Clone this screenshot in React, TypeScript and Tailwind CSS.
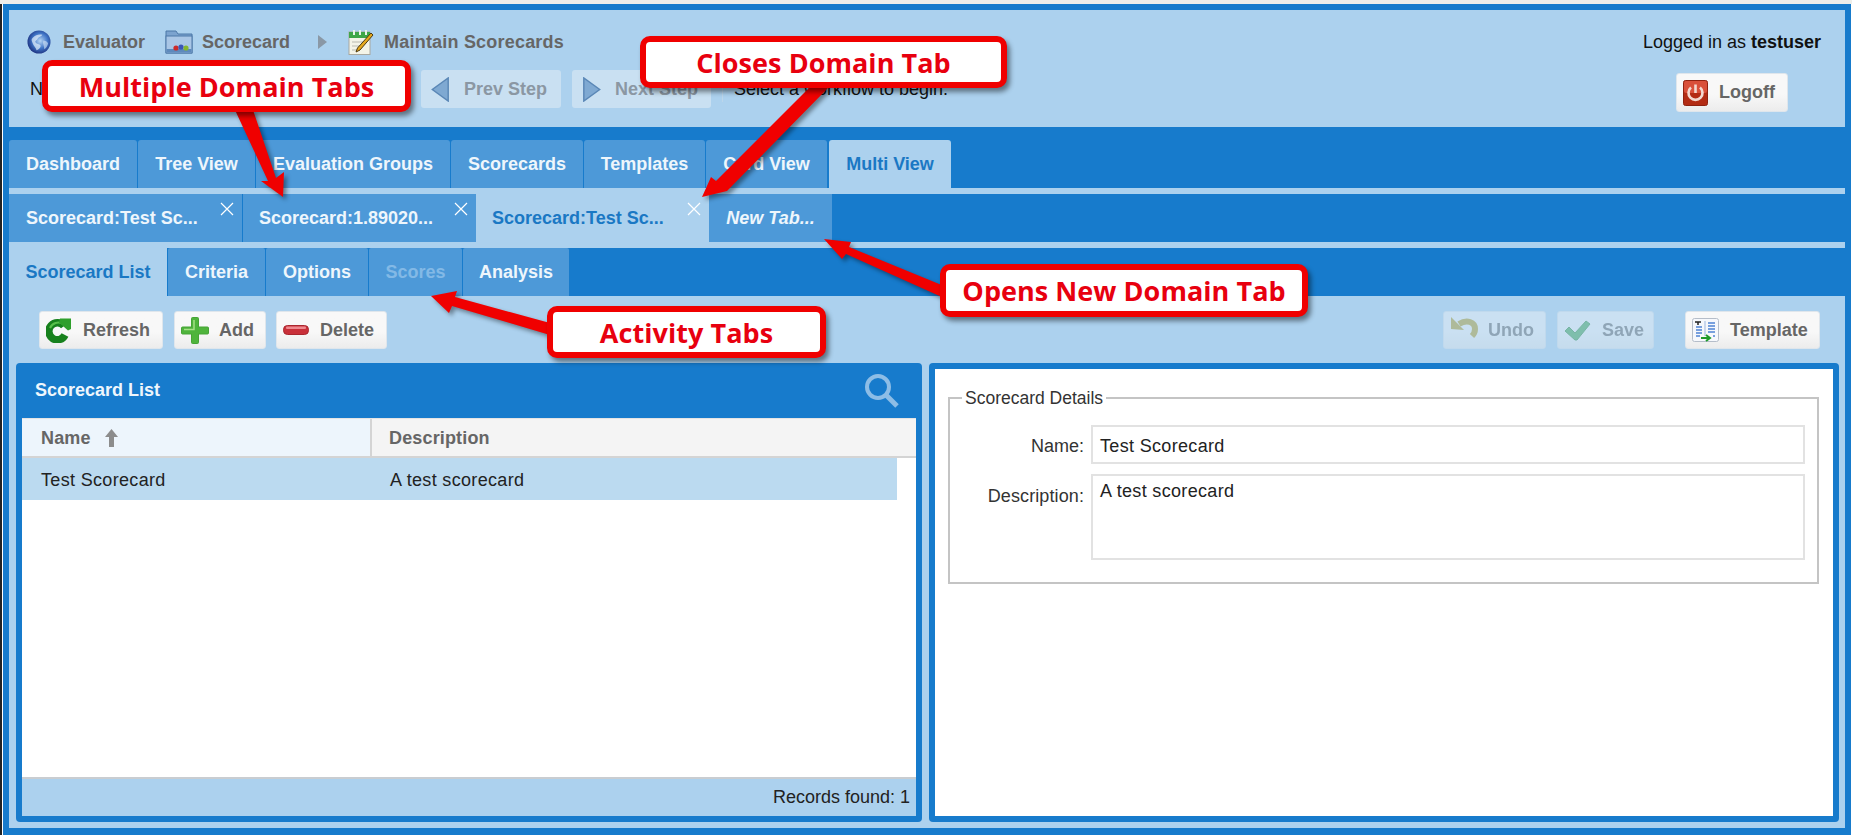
import React from 'react';

const mainTabs = [
  { label: 'Dashboard', w: 'w-[128px]' },
  { label: 'Tree View', w: 'w-[117px]' },
  { label: 'Evaluation Groups', w: 'w-[194px]' },
  { label: 'Scorecards', w: 'w-[132px]' },
  { label: 'Templates', w: 'w-[121px]' },
  { label: 'Card View', w: 'w-[121px]' },
];

const activityTabs = [
  { label: 'Criteria', w: 'w-[97px]', muted: false },
  { label: 'Options', w: 'w-[102px]', muted: false },
  { label: 'Scores', w: 'w-[93px]', muted: true },
  { label: 'Analysis', w: 'w-[106px]', muted: false },
];

const Globe = () => (
  <svg width="24" height="24" viewBox="0 0 25 25">
    <defs>
      <radialGradient id="globe" cx="0.55" cy="0.45" r="0.6">
        <stop offset="0" stopColor="#b4d4f4" />
        <stop offset="0.55" stopColor="#3f74c6" />
        <stop offset="1" stopColor="#1a2c7a" />
      </radialGradient>
    </defs>
    <circle cx="12.500" cy="12.500" r="12" fill="url(#globe)" />
    <path d="M6 8c3-3 7-4 10-3-1 2-4 2-5 4s-3 2-2 4 4 1 5 3-2 5-4 5c-1-3-3-4-4-7S4 10 6 8z" fill="#dbe9f8" opacity="0.75" />
    <path d="M17 11c2 0 4 1 5 3-1 3-2 5-4 6 0-3-2-6-1-9z" fill="#dbe9f8" opacity="0.6" />
  </svg>
);

const Folder = () => (
  <svg width="28" height="24" viewBox="0 0 28 24">
    <path d="M1 1h10l2 3h14v19H1z" fill="#7ba3cf" stroke="#4d78a8" />
    <rect x="1" y="6" width="26" height="17" fill="#a9c6e6" stroke="#4d78a8" />
    <rect x="1.500" y="19" width="25" height="3.500" fill="#5d8abd" />
    <circle cx="11" cy="18" r="2.600" fill="#cc2a2a" />
    <circle cx="16" cy="17" r="2.600" fill="#3a55b8" />
    <circle cx="21" cy="18" r="2.600" fill="#86b52e" />
  </svg>
);

const Notepad = () => (
  <svg width="26" height="26" viewBox="0 0 26 26">
    <rect x="1" y="3" width="21" height="22.500" fill="#f4f4e8" stroke="#a8a8a0" />
    <rect x="1" y="3" width="21" height="6" fill="#3fa648" />
    <rect x="5" y="1" width="2" height="5" fill="#e8f4e8" />
    <rect x="11" y="1" width="2" height="5" fill="#e8f4e8" />
    <rect x="17" y="1" width="2" height="5" fill="#e8f4e8" />
    <path d="M4 13h13M4 17h10M4 21h8" stroke="#b9b9b0" strokeWidth="1.200" />
    <path d="M23 4l2 2-13 15-4 2 1.500-4z" fill="#e6a91e" stroke="#4b3a12" strokeWidth="1" />
  </svg>
);

const Refresh = () => (
  <svg width="25" height="25" viewBox="0 0 25 25">
    <path d="M18 8a8.500 8.500 0 1 0 1 9" fill="none" stroke="#17811d" strokeWidth="7.500" />
    <path d="M17 6a9 9 0 0 0-13 4" fill="none" stroke="#58c04a" strokeWidth="2" />
    <path d="M14 0.500h11v10.500l-3 1.500-9-8z" fill="#2f9f2c" />
  </svg>
);

const PlusIcon = () => (
  <svg width="28" height="27" viewBox="0 0 28 27">
    <path d="M10.500 1.500a1 1 0 0 1 1-1h5a1 1 0 0 1 1 1V10H26.500a1 1 0 0 1 1 1v5a1 1 0 0 1-1 1H17.500v8.500a1 1 0 0 1-1 1h-5a1 1 0 0 1-1-1V17H1.500a1 1 0 0 1-1-1v-5a1 1 0 0 1 1-1H10.500z" fill="#4fb43c" stroke="#46a436" />
    <path d="M13 3v9.500H3" fill="none" stroke="#a5e086" strokeWidth="1.500" />
  </svg>
);

const MinusIcon = () => (
  <svg width="26" height="10" viewBox="0 0 26 10">
    <rect x="0.500" y="0.500" width="25" height="9" rx="4" fill="#c9303a" stroke="#a9272f" />
    <rect x="3" y="1.500" width="20" height="2.500" rx="1" fill="#ee8a90" />
  </svg>
);

const Undo = () => (
  <svg width="28" height="24" viewBox="0 0 28 24" className="-translate-y-[3px]">
    <path d="M9 9C17 4 25 7 25 14c0 3-1 5-3 7" fill="none" stroke="#b19a1e" strokeWidth="6" />
    <path d="M1 2v12l13 1z" fill="#b19a1e" />
  </svg>
);

const Check = () => (
  <svg width="27" height="21" viewBox="0 0 27 21">
    <path d="M1 11l4-4 6 6L22 1l4 3-13 16h-2z" fill="#3aa44a" stroke="#2b8a3a" />
  </svg>
);

const TemplateIcon = () => (
  <svg width="27" height="24" viewBox="0 0 27 24">
    <rect x="0.500" y="0.500" width="26" height="23" rx="2" fill="#f6f8fc" stroke="#b5bdc9" />
    <path d="M4 9h6M4 12h6M4 15h6M4 18h4M16 5h7M16 8h7M16 11h7M16 14h7M21 18h2" stroke="#4f82d4" strokeWidth="1.300" />
    <path d="M13 3v15" stroke="#9db6de" />
    <path d="M3 4h6M6 4v3" stroke="#222" strokeWidth="1.500" />
    <path d="M9 20h8M14 17l4 3-4 3" fill="none" stroke="#1f9a2b" strokeWidth="2" />
  </svg>
);

const Power = () => (
  <svg width="25" height="26" viewBox="0 0 25 26">
    <rect x="0.500" y="0.500" width="24" height="25" rx="2" fill="#b32c14" stroke="#8f2210" />
    <rect x="1" y="1" width="23" height="12" rx="2" fill="#d9503a" />
    <path d="M8 7.500a7 7 0 1 0 9 0" fill="none" stroke="#f3d9d0" strokeWidth="2.600" />
    <path d="M12.500 4.500v8.500" stroke="#f3d9d0" strokeWidth="2.600" />
  </svg>
);

const StepArrow = ({ flip }: { flip?: boolean }) => (
  <svg width="19" height="25" viewBox="0 0 19 26" className={flip ? 'rotate-180' : ''}>
    <path d="M17.500 1v24L1 13z" fill="#7fa9d2" stroke="#5a87b6" strokeWidth="1.500" />
  </svg>
);

const Btn = ({
  icon,
  label,
  w,
  gap,
  off,
}: {
  icon: React.ReactNode;
  label: string;
  w: string;
  gap: string;
  off?: boolean;
}) => (
  <div
    className={`${w} ${gap} h-[38px] flex items-center pl-[6px] rounded-[3px] border border-[#dfe6ec] bg-gradient-to-b from-[#f8f8f8] from-55% to-[#ececec] text-[18px] font-bold text-[#666666] ${
      off ? 'opacity-40' : ''
    }`}
  >
    {icon}
    <span>{label}</span>
  </div>
);

const Callout = ({ className, children }: { className: string; children: React.ReactNode }) => (
  <div
    className={`absolute flex items-center justify-center pt-[2px] rounded-[10px] border-[6px] border-[#f00000] bg-white text-[#e8000f] font-bold text-[27px] tracking-[0.05px] shadow-[3px_4px_5px_rgba(0,0,0,0.45)] font-['Open_Sans',sans-serif] ${className}`}
  >
    {children}
  </div>
);

const CloseX = ({ className }: { className: string }) => (
  <svg width="14" height="14" viewBox="0 0 14 14" className={`absolute top-[8px] right-[8px] ${className}`}>
    <path d="M1 1l12 12M13 1L1 13" stroke="currentColor" strokeWidth="1.200" />
  </svg>
);

const App: React.FC = () => {
  return (
    <div className="relative w-[1852px] h-[836px] overflow-hidden bg-white font-['Liberation_Sans',Arial,sans-serif] text-[18px]">
      <div className="h-[4px] bg-[#eeeeea]" />
      <div className="flex h-[831px] border-l-[2px] border-[#222222]">
        <div className="ml-[1px] mr-[1px] flex-1 flex flex-col bg-[#177bcc] px-[6px] pt-[6px] pb-[7px]">
          {/* header */}
          <div className="h-[117px] shrink-0 flex justify-between bg-[#acd1ee]">
            <div>
              <div className="flex items-center h-[28px] mt-[18px] pl-[18px] font-bold text-[#666666]">
                <Globe />
                <span className="ml-[12px]">Evaluator</span>
                <span className="ml-[20px]"><Folder /></span>
                <span className="ml-[9px]">Scorecard</span>
                <svg width="9" height="14" viewBox="0 0 9 14" className="ml-[28px]">
                  <path d="M0 0l9 7-9 7z" fill="#8a98a6" />
                </svg>
                <span className="ml-[21px]"><Notepad /></span>
                <span className="ml-[10px] tracking-[0.2px]">Maintain Scorecards</span>
              </div>
              <div className="flex items-center h-[38px] mt-[14px]">
                <span className="ml-[21px] w-[391px] text-[#111111]">N</span>
                <div className="w-[140px] h-[38px] flex items-center pl-[10px] rounded-[3px] bg-[#c9e0f2] text-[#8b97a3] font-bold">
                  <StepArrow />
                  <span className="ml-[14px]">Prev Step</span>
                </div>
                <div className="ml-[11px] w-[139px] h-[38px] flex items-center pl-[10px] rounded-[3px] bg-[#c9e0f2] text-[#8b97a3] font-bold">
                  <StepArrow flip />
                  <span className="ml-[14px]">Next Step</span>
                </div>
                <div className="ml-[11px] w-px h-[26px] bg-[#bcd6ea]" />
                <span className="ml-[11px] text-[#111111]">Select a workflow to begin.</span>
              </div>
            </div>
            <div className="flex flex-col items-end pr-[24px]">
              <div className="mt-[20px] h-[24px] leading-[24px] text-[#111111]">
                Logged in as <b>testuser</b>
              </div>
              <div className="mt-[19px] mr-[33px] w-[112px] h-[39px] flex items-center gap-[11px] pl-[6px] rounded-[3px] border border-[#dfe6ec] bg-gradient-to-b from-[#f8f8f8] from-55% to-[#ececec] font-bold text-[#666666]">
                <Power />
                <span>Logoff</span>
              </div>
            </div>
          </div>

          {/* main tabs */}
          <div className="h-[61px] shrink-0 flex items-end gap-px">
            {mainTabs.map(t => (
              <div
                key={t.label}
                className={`${t.w} h-[48px] flex items-center justify-center rounded-t-[3px] bg-[#4d99d8] font-bold text-[#eef6fc]`}
              >
                {t.label}
              </div>
            ))}
            <div className="ml-px w-[122px] h-[48px] flex items-center justify-center rounded-t-[3px] bg-[#acd1ee] font-bold text-[#1a78c4]">
              Multi View
            </div>
          </div>
          <div className="h-[6px] shrink-0 bg-[#acd1ee]" />

          {/* domain tabs */}
          <div className="h-[48px] shrink-0 flex items-stretch">
            <div className="relative w-[233px] flex items-center pl-[17px] bg-[#4d99d8] font-bold text-[#eef6fc]">
              Scorecard:Test Sc...
              <CloseX className="text-white" />
            </div>
            <div className="relative ml-px w-[233px] flex items-center pl-[16px] bg-[#4d99d8] font-bold text-[#eef6fc]">
              Scorecard:1.89020...
              <CloseX className="text-white" />
            </div>
            <div className="relative w-[233px] flex items-center pl-[16px] bg-[#acd1ee] font-bold text-[#1a78c4]">
              Scorecard:Test Sc...
              <CloseX className="text-white" />
            </div>
            <div className="w-[123px] flex items-center justify-center bg-[#4d99d8] font-bold italic text-[#eef6fc]">
              New Tab...
            </div>
          </div>
          <div className="h-[6px] shrink-0 bg-[#acd1ee]" />

          {/* activity tabs */}
          <div className="h-[48px] shrink-0 flex items-stretch gap-px">
            <div className="w-[158px] flex items-center justify-center pt-px bg-[#acd1ee] font-bold text-[#1a78c4]">
              Scorecard List
            </div>
            {activityTabs.map(t => (
              <div
                key={t.label}
                className={`${t.w} flex items-center justify-center pt-px rounded-t-[2px] bg-[#4d99d8] font-bold ${
                  t.muted ? 'text-[#83b9e6]' : 'text-[#eef6fc]'
                }`}
              >
                {t.label}
              </div>
            ))}
          </div>

          {/* content */}
          <div className="flex-1 min-h-0 flex flex-col bg-[#acd1ee]">
            <div className="h-[67px] shrink-0 flex items-start pt-[15px] pl-[30px] pr-[25px]">
              <Btn icon={<Refresh />} label="Refresh" w="w-[124px]" gap="gap-[12px]" />
              <div className="ml-[11px]">
                <Btn icon={<PlusIcon />} label="Add" w="w-[92px]" gap="gap-[10px]" />
              </div>
              <div className="ml-[10px]">
                <Btn icon={<MinusIcon />} label="Delete" w="w-[111px]" gap="gap-[11px]" />
              </div>
              <div className="ml-auto">
                <Btn icon={<Undo />} label="Undo" w="w-[103px]" gap="gap-[10px]" off />
              </div>
              <div className="ml-[11px]">
                <Btn icon={<Check />} label="Save" w="w-[97px]" gap="gap-[11px]" off />
              </div>
              <div className="ml-[31px]">
                <Btn icon={<TemplateIcon />} label="Template" w="w-[135px]" gap="gap-[11px]" />
              </div>
            </div>

            <div className="flex-1 min-h-0 flex gap-[7px] pl-[7px] pr-[6px] pb-[6px]">
              {/* left panel */}
              <div className="w-[906px] flex flex-col rounded-[4px] bg-[#177bcc] px-[6px] pb-[6px]">
                <div className="h-[55px] shrink-0 flex items-center justify-between pl-[13px] pr-[16px] font-bold text-[#eef6fc]">
                  <span>Scorecard List</span>
                  <svg width="36" height="36" viewBox="0 0 36 36">
                    <circle cx="14" cy="14" r="11" fill="none" stroke="#8dbde6" strokeWidth="4" />
                    <path d="M22 22l11 11" stroke="#8dbde6" strokeWidth="5" />
                  </svg>
                </div>
                <div className="flex-1 min-h-0 flex flex-col bg-white">
                  <div className="h-[40px] shrink-0 flex border-t border-b-[2px] border-t-[#e4e4e4] border-b-[#d4d4d4] bg-[#f4f4f4] font-bold text-[#666666] tracking-[0.15px]">
                    <div className="w-[350px] flex items-center gap-[14px] pl-[19px] pt-px bg-[#edf5fc] border-r-[2px] border-[#d4d4d4]">
                      Name
                      <svg width="13" height="18" viewBox="0 0 13 18">
                        <path d="M6.500 0L13 8H9v10H4V8H0z" fill="#8c8c8c" />
                      </svg>
                    </div>
                    <div className="flex items-center pl-[17px] pt-px">Description</div>
                  </div>
                  <div className="h-[42px] shrink-0 w-[875px] flex items-center pt-[3px] bg-[#bbdaf0] text-[#222222] tracking-[0.33px]">
                    <div className="w-[368px] pl-[19px]">Test Scorecard</div>
                    <div>A test scorecard</div>
                  </div>
                  <div className="flex-1" />
                  <div className="h-[39px] shrink-0 flex items-center justify-end pr-[6px] border-t-[2px] border-[#c9cdd1] bg-[#acd1ee] text-[#222222]">
                    Records found: 1
                  </div>
                </div>
              </div>

              {/* right panel */}
              <div className="flex-1 rounded-[4px] bg-[#177bcc] p-[6px]">
                <div className="h-full bg-white pl-[13px] pr-[14px] pt-[19px]">
                  <fieldset className="h-[196px] border-[2px] border-[#c4c4c4] pl-[12px] pr-[12px] pb-[20px]">
                    <legend className="px-[3px] text-[17.500px] text-[#333333] leading-[20px]">Scorecard Details</legend>
                    <div className="flex items-stretch h-[39px] mt-[17px]">
                      <label className="w-[122px] flex items-center justify-end pt-[3px] text-[#333333]">Name:</label>
                      <div className="ml-[7px] flex-1 flex items-center pl-[7px] pt-[3px] border-[2px] border-[#e2e2e2] text-[#222222] tracking-[0.33px]">
                        Test Scorecard
                      </div>
                    </div>
                    <div className="flex items-stretch h-[86px] mt-[10px]">
                      <label className="w-[122px] pt-[9px] text-right text-[#333333] tracking-[0.1px]">Description:</label>
                      <div className="ml-[7px] flex-1 pl-[7px] pt-[2px] border-[2px] border-[#e2e2e2] text-[#222222] tracking-[0.33px]">
                        A test scorecard
                      </div>
                    </div>
                  </fieldset>
                </div>
              </div>
            </div>
          </div>
        </div>
      </div>

      {/* annotations */}
      <svg width="1852" height="836" viewBox="0 0 1852 836" className="absolute inset-0 pointer-events-none">
        <g fill="#f00000" stroke="none">
          <path d="M235 110L253 110 276 178 284 172 283 197 261 181 268 181z" style={{ filter: 'drop-shadow(3px 3px 2px rgba(0,0,0,0.4))' }} />
          <path d="M812 85L828 88 727 191 702 197 711 177 716 181z" style={{ filter: 'drop-shadow(3px 3px 2px rgba(0,0,0,0.4))' }} />
          <path d="M944 286L944 298 846 254 842 259 824 239 851 242 849 247z" style={{ filter: 'drop-shadow(3px 3px 2px rgba(0,0,0,0.4))' }} />
          <path d="M550 323L550 335 452 306 449 313 431 296 457 291 455 297z" style={{ filter: 'drop-shadow(3px 3px 2px rgba(0,0,0,0.4))' }} />
        </g>
      </svg>
      <Callout className="left-[42px] top-[60px] w-[369px] h-[52px]">Multiple Domain Tabs</Callout>
      <Callout className="left-[640px] top-[36px] w-[367px] h-[52px]">Closes Domain Tab</Callout>
      <Callout className="left-[940px] top-[264px] w-[368px] h-[53px]">Opens New Domain Tab</Callout>
      <Callout className="left-[547px] top-[306px] w-[279px] h-[52px]">Activity Tabs</Callout>
    </div>
  );
};

export default App;
